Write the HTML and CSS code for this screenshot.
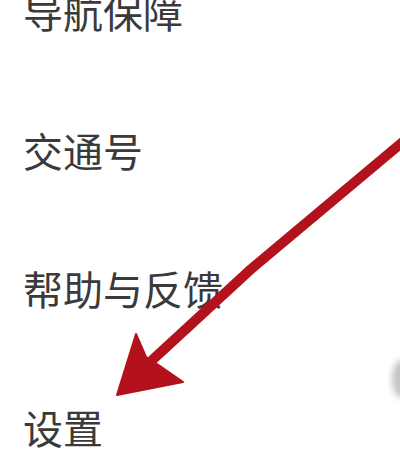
FILE: index.html
```html
<!DOCTYPE html>
<html lang="zh-CN">
<head>
<meta charset="utf-8">
<link rel="stylesheet" href="styles.css">
</head>
<body>
<div class="page">
  <ul class="menu">
    <li class="item">导航保障</li>
    <li class="item">交通号</li>
    <li class="item">帮助与反馈</li>
    <li class="item">设置</li>
  </ul>
  <div class="edge-handle"></div>
  <svg class="arrow" width="400" height="472" viewBox="0 0 400 472">
    <path d="M404 141 L250 270 L148 364" fill="none" stroke="#b3121c" stroke-width="10" stroke-linecap="round"/>
    <path d="M117 395 L136 334 L146 357 L160 366 L183 382 Z" fill="#b3121c" stroke="#b3121c" stroke-width="2" stroke-linejoin="round"/>
  </svg>
</div>
</body>
</html>
```

FILE: styles.css
```css
html, body {
  margin: 0;
  padding: 0;
  background: #ffffff;
}
.page {
  position: relative;
  width: 400px;
  height: 472px;
  overflow: hidden;
  background: #ffffff;
}
.menu {
  list-style: none;
  margin: -9px 0 0 0;
  padding: 0 0 0 23px;
  display: flex;
  flex-direction: column;
  gap: 98.7px;
}
.item {
  font-family: "Noto Sans CJK SC", "Noto Sans", sans-serif;
  font-size: 40px;
  line-height: 40px;
  height: 40px;
  color: #3a3a3a;
  white-space: nowrap;
}
.arrow {
  position: absolute;
  left: 0;
  top: 0;
  filter: blur(0.6px);
}
.edge-handle {
  position: absolute;
  left: 392px;
  top: 360px;
  width: 20px;
  height: 38px;
  border-radius: 50%;
  background: #c4c4c4;
  filter: blur(3px);
}
```
